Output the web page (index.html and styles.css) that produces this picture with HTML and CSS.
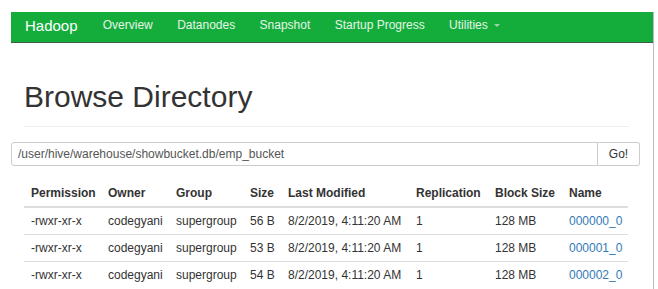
FILE: index.html
```html
<!DOCTYPE html>
<html lang="en">
<head>
    <meta charset="UTF-8">
    <title>Browsing HDFS</title>
    <link rel="stylesheet" href="styles.css">
</head>
<body>
    <div class="page">
        <nav class="navbar">
            <a class="brand" href="#">Hadoop</a>
            <a class="nav-link" href="#">Overview</a>
            <a class="nav-link" href="#">Datanodes</a>
            <a class="nav-link" href="#">Snapshot</a>
            <a class="nav-link" href="#">Startup Progress</a>
            <a class="nav-link" href="#">Utilities <span class="caret"></span></a>
        </nav>

        <div class="page-header">
            <h1>Browse Directory</h1>
        </div>

        <!-- Path box -->
        <form class="input-group">
            <input type="text" class="path" value="/user/hive/warehouse/showbucket.db/emp_bucket">
            <button type="button" class="go">Go!</button>
        </form>

        <table class="listing">
            <thead>
                <tr>
                    <th class="c-perm">Permission</th>
                    <th class="c-owner">Owner</th>
                    <th class="c-group">Group</th>
                    <th class="c-size">Size</th>
                    <th class="c-mod">Last Modified</th>
                    <th class="c-rep">Replication</th>
                    <th class="c-block">Block Size</th>
                    <th class="c-name">Name</th>
                </tr>
            </thead>
            <tbody>
                <tr>
                    <td>-rwxr-xr-x</td>
                    <td>codegyani</td>
                    <td>supergroup</td>
                    <td>56 B</td>
                    <td>8/2/2019, 4:11:20 AM</td>
                    <td>1</td>
                    <td>128 MB</td>
                    <td><a href="#">000000_0</a></td>
                </tr>
                <tr>
                    <td>-rwxr-xr-x</td>
                    <td>codegyani</td>
                    <td>supergroup</td>
                    <td>53 B</td>
                    <td>8/2/2019, 4:11:20 AM</td>
                    <td>1</td>
                    <td>128 MB</td>
                    <td><a href="#">000001_0</a></td>
                </tr>
                <tr>
                    <td>-rwxr-xr-x</td>
                    <td>codegyani</td>
                    <td>supergroup</td>
                    <td>54 B</td>
                    <td>8/2/2019, 4:11:20 AM</td>
                    <td>1</td>
                    <td>128 MB</td>
                    <td><a href="#">000002_0</a></td>
                </tr>
            </tbody>
        </table>
    </div>
</body>
</html>
```

FILE: styles.css
```css
html, body {
    margin: 0;
    background: #fff;
}
body {
    font-family: "Liberation Sans", Arial, sans-serif;
    font-size: 12px;
    color: #333;
}
.page {
    margin: 12px 4px 0 11px;
    border-right: 1px solid #bbb;
    height: 277px;
    overflow: hidden;
}
.navbar {
    display: flex;
    align-items: center;
    box-sizing: border-box;
    height: 31px;
    padding: 0 0 4px 14px;
    background-color: #14ad3c;
    border-bottom: 1px solid #3d5f47;
}
.navbar a {
    text-decoration: none;
}
.brand {
    color: #fff;
    font-size: 15px;
    margin-right: 13px;
}
.nav-link {
    color: #e6f4e8;
    font-size: 12px;
    padding: 0 12.2px;
}
.caret {
    display: inline-block;
    width: 0;
    height: 0;
    margin-left: 3px;
    vertical-align: middle;
    border-top: 3px solid #9fd3aa;
    border-left: 3px solid transparent;
    border-right: 3px solid transparent;
}
.page-header {
    margin: 0 24px 0 13px;
    padding-top: 37px;
    border-bottom: 1px solid #eee;
    height: 84px;
    box-sizing: border-box;
}
.page-header h1 {
    margin: 0;
    font-size: 30px;
    font-weight: normal;
    line-height: 34px;
    color: #333;
}
.input-group {
    display: flex;
    width: 629px;
    height: 24px;
    margin: 15px 0 0 0;
}
.path {
    flex: 1;
    height: 24px;
    box-sizing: border-box;
    border: 1px solid #ccc;
    border-radius: 3px 0 0 3px;
    padding: 0 6px;
    font-family: inherit;
    font-size: 12px;
    color: #555;
}
.go {
    width: 42px;
    height: 24px;
    box-sizing: border-box;
    border: 1px solid #ccc;
    border-left: none;
    border-radius: 0 3px 3px 0;
    background: #fff;
    font-family: inherit;
    font-size: 12px;
    color: #333;
    padding: 0;
}
.listing {
    margin: 14px 0 0 13px;
    width: 604px;
    border-collapse: collapse;
    table-layout: fixed;
}
.listing th, .listing td {
    text-align: left;
    padding: 0 7px;
    height: 26px;
    white-space: nowrap;
}
.listing th {
    font-weight: bold;
    border-bottom: 2px solid #ddd;
}
.listing td {
    border-top: 1px solid #ddd;
}
.listing a {
    color: #337ab7;
    text-decoration: none;
}
.c-perm { width: 63px; }
.c-owner { width: 54px; }
.c-group { width: 60px; }
.c-size { width: 24px; }
.c-mod { width: 114px; }
.c-rep { width: 65px; }
.c-block { width: 60px; }
.c-name { width: 52px; }
```
